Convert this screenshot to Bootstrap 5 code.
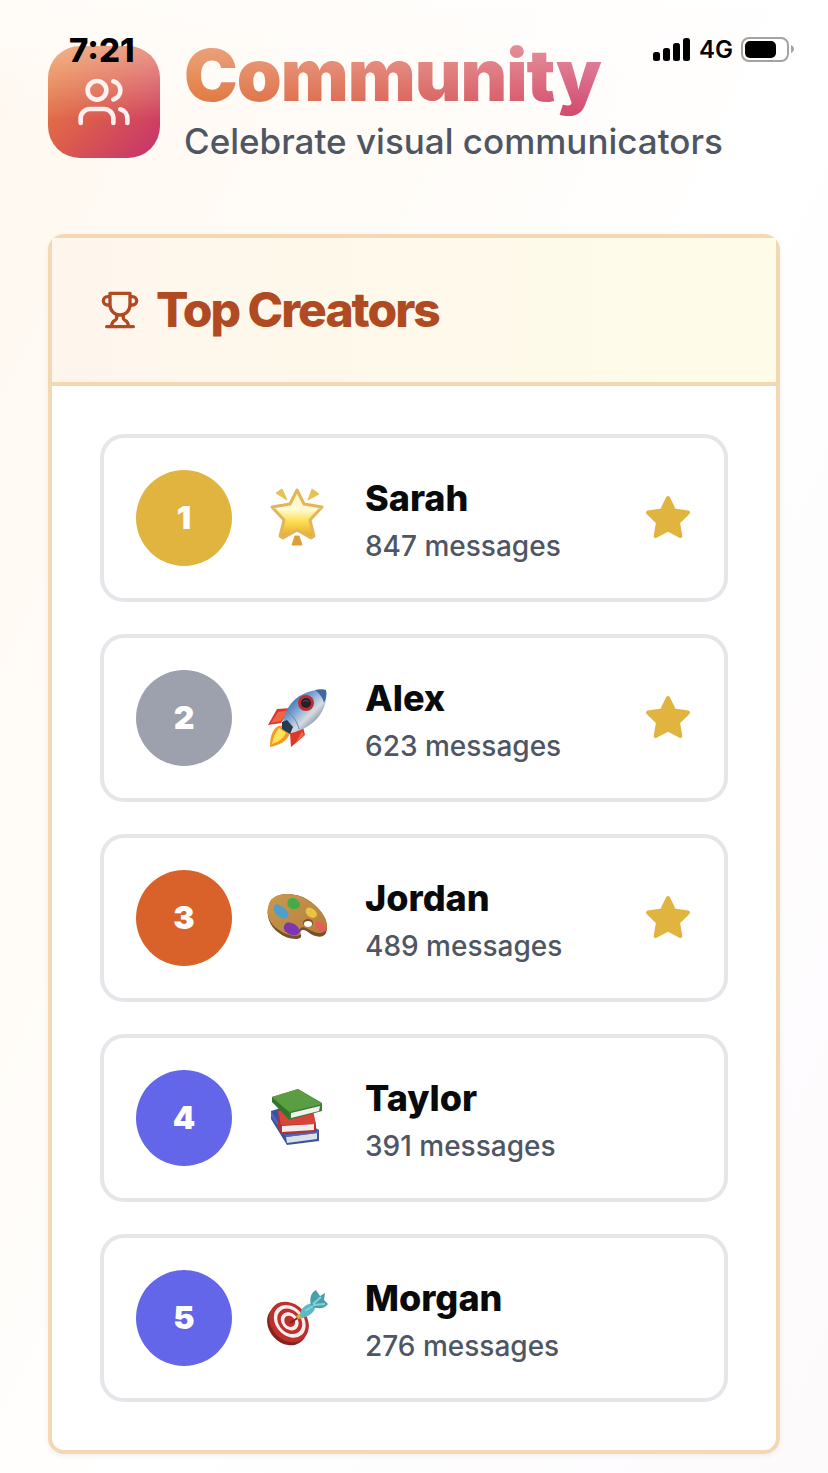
<!DOCTYPE html>
<html lang="en">
<head>
<meta charset="utf-8">
<meta name="viewport" content="width=device-width, initial-scale=1">
<title>Community</title>
<link href="https://cdn.jsdelivr.net/npm/bootstrap@5.3.0/dist/css/bootstrap.min.css" rel="stylesheet">
<style>
  body {
    font-family: Inter, "Liberation Sans", sans-serif;
    color: #090a0b;
    background: linear-gradient(115deg, #fff8f0 0%, #fffbf6 25%, #ffffff 55%, #fdfafc 100%);
    min-height: 100vh;
  }
  .page { padding: 46px 48px 19px; }
  .status-bar { z-index: 3; padding: 34px 34px 0 69px; color: #000; }
  .clock { font-size: 33px; line-height: 32px; font-weight: 800; }
  .network { font-size: 24px; line-height: 32px; font-weight: 600; }
  .top-fade {
    z-index: 2; height: 120px; pointer-events: none;
    background: linear-gradient(rgba(255,255,255,.55), rgba(255,255,255,.3) 50%, rgba(255,255,255,0));
  }
  .page-header { gap: 24px; margin-bottom: 76px; }
  .logo-tile {
    width: 112px; height: 112px; border-radius: 32px;
    background: linear-gradient(135deg, #ea8a40 0%, #dc5d4c 50%, #c5306f 100%);
  }
  .page-title {
    font-size: 72px; line-height: 72px; font-weight: 900; letter-spacing: -1px;
    padding-bottom: 8px; margin: -7px 0 -8px;
    background: linear-gradient(100deg, #e0702c 0%, #d5525a 55%, #cf3f74 85%);
    -webkit-background-clip: text; background-clip: text; color: transparent;
  }
  .subtitle { font-size: 35px; line-height: 47px; padding-top: 7px; font-weight: 500; color: #4f5663; }
  .page-header { height: 112px; }
  .creators { border: 4px solid #f4d8b4; border-radius: 16px; background: #fff; box-shadow: 0 2px 6px rgba(0,0,0,.06); }
  .creators-head {
    gap: 16px; padding: 48px; color: #b04a22;
    border-bottom: 4px solid #f4d8b4;
    background: linear-gradient(90deg, #fef6ed, #fefce8);
  }
  .creators-title { font-size: 48px; line-height: 48px; font-weight: 800; letter-spacing: -2px; }
  .creators-list { padding: 48px; gap: 32px; }
  .creator { border: 4px solid #e4e6e9; border-radius: 24px; padding: 32px; gap: 32px; }
  .rank { width: 96px; height: 96px; font-size: 32px; font-weight: 900; color: #fff; background: #6466e9; }
  .rank-gold { background: #e0b43e; }
  .rank-silver { background: #9da1ae; }
  .rank-bronze { background: #d8622a; }
  .creator-name { font-size: 36px; line-height: 56px; font-weight: 800; }
  .creator-count { font-size: 28px; line-height: 40px; font-weight: 500; color: #4f5663; }
  .star { color: #e0b43e; }
</style>
</head>
<body class="position-relative">

<div class="status-bar position-absolute top-0 start-0 end-0 d-flex justify-content-between align-items-center">
  <span class="clock">7:21</span>
  <span class="d-flex align-items-center">
    <svg class="me-2" width="38" height="24" viewBox="0 0 38 24" aria-label="Signal"><rect y="14" width="7" height="9" rx="2.5"/><rect x="10" y="10" width="7" height="13" rx="2.5"/><rect x="20" y="5" width="7" height="18" rx="2.5"/><rect x="30" y="0" width="7" height="23" rx="2.5"/></svg>
    <span class="network me-2">4G</span>
    <svg width="53" height="26" viewBox="0 0 53 26" aria-label="Battery"><rect x="1" y="1" width="46" height="23" rx="7" fill="none" stroke="#a3a3a3" stroke-width="2"/><rect x="4" y="4" width="31" height="17" rx="5"/><path d="M50 8c4 2 4 6 0 8z" fill="#a3a3a3"/></svg>
  </span>
</div>
<div class="top-fade position-absolute top-0 start-0 end-0"></div>

<div class="page">
  <header class="page-header d-flex">
    <div class="logo-tile flex-shrink-0 d-flex align-items-center justify-content-center">
      <svg width="56" height="56" viewBox="0 0 24 24" fill="none" stroke="#fdeff0" stroke-width="2" stroke-linecap="round" stroke-linejoin="round" aria-hidden="true"><path d="M16 21v-2a4 4 0 0 0-4-4H6a4 4 0 0 0-4 4v2"/><circle cx="9" cy="7" r="4"/><path d="M22 21v-2a4 4 0 0 0-3-3.870"/><path d="M16 3.130a4 4 0 0 1 0 7.750"/></svg>
    </div>
    <div>
      <h1 class="page-title">Community</h1>
      <p class="subtitle mb-0">Celebrate visual communicators</p>
    </div>
  </header>

  <section class="creators" aria-labelledby="creators-title">
    <div class="creators-head d-flex align-items-center">
      <svg width="40" height="40" viewBox="0 0 24 24" fill="none" stroke="currentColor" stroke-width="2" stroke-linecap="round" stroke-linejoin="round" aria-hidden="true"><path d="M6 9H4.500a2.500 2.500 0 0 1 0-5H6M18 9h1.500a2.500 2.500 0 0 0 0-5H18M4 22h16M10 14.660V17c0 .55-.47.98-.97 1.210C7.850 18.750 7 20.240 7 22M14 14.660V17c0 .55.47.98.97 1.210C16.150 18.750 17 20.240 17 22M18 2H6v7a6 6 0 0 0 12 0V2Z"/></svg>
      <h2 class="creators-title mb-0" id="creators-title">Top Creators</h2>
    </div>

    <ol class="creators-list list-unstyled d-flex flex-column mb-0">
      <li class="creator d-flex align-items-center">
        <span class="rank rank-gold rounded-circle flex-shrink-0 d-flex align-items-center justify-content-center">1</span>
        <svg class="flex-shrink-0" width="69" height="66" viewBox="0 0 69 66" role="img" aria-label="Glowing star">
          <defs><linearGradient id="glow" x1="0" y1="0" x2="0" y2="1"><stop offset="0" stop-color="#fff0b8"/><stop offset=".4" stop-color="#fffbd6"/><stop offset=".65" stop-color="#fddf52"/><stop offset="1" stop-color="#e2a32d"/></linearGradient></defs>
          <path d="M12 8l6-4 5 11zM48 4l7 5-11 6z" fill="#e6c254" stroke="#e6c254" stroke-linejoin="round"/>
          <path d="M31 51h4l3 9H28z" fill="#dd9f3a" stroke="#dd9f3a" stroke-linejoin="round"/>
          <path d="M33 5l7 14 18 3-12 13 4 16-3 2-14-8-14 8-3-2 4-16L8 22l18-3z" fill="url(#glow)" stroke="#e2b55a" stroke-width="3" stroke-linejoin="round"/>
        </svg>
        <div class="flex-grow-1">
          <div class="creator-name">Sarah</div>
          <div class="creator-count">847 messages</div>
        </div>
        <svg class="star flex-shrink-0" width="48" height="48" viewBox="0 0 24 24" fill="currentColor" stroke="currentColor" stroke-width="2" stroke-linejoin="round" aria-hidden="true"><path d="M12 2l3.090 6.260L22 9.270l-5 4.870 1.180 6.880L12 17.770l-6.180 3.250L7 14.140 2 9.270l6.910-1.010z"/></svg>
      </li>

      <li class="creator d-flex align-items-center">
        <span class="rank rank-silver rounded-circle flex-shrink-0 d-flex align-items-center justify-content-center">2</span>
        <svg class="flex-shrink-0" width="69" height="66" viewBox="0 0 69 66" role="img" aria-label="Rocket">
          <defs><linearGradient id="hull" x1="0" y1="0" x2="1" y2="1"><stop offset=".15" stop-color="#315f9f"/><stop offset=".4" stop-color="#7fa6d6"/><stop offset=".6" stop-color="#d8dce0"/><stop offset=".85" stop-color="#58708d"/></linearGradient></defs>
          <path d="M27 23L13 24 4 40l13-2zM39 42l2 8-14 12-1-14z" fill="#d9382a"/><path d="M26 25l-12 2-7 11 10-2zM38 46l-7 13 9-9z" fill="#ee6545"/>
          <path d="M14 41c-6 4-8 11-8 21 9-2 17-5 20-14l-5-8z" fill="#f39a25"/><path d="M15 43c-4 5-6 10-7 16 6-2 11-5 14-11z" fill="#ffe259"/>
          <path d="M19 38C22 15 42 3 62 5c3 20-12 38-35 43z" fill="url(#hull)"/>
          <path d="M51 5c4-1 8-1 11 0 1 5 0 9-2 13-1-5-4-9-9-13z" fill="#4169a1"/>
          <path d="M24 27c5 4 9 9 11 17" fill="none" stroke="#6989ae"/>
          <path d="M18 37l5-2 6 7-3 7-8-5z" fill="#263b50"/>
          <circle cx="42" cy="18" r="8" fill="#b92f2e"/><circle cx="42" cy="18" r="5" fill="#251e2d"/><path d="M39 17a4 4 0 0 1 6 0" fill="none" stroke="#575063"/>
        </svg>
        <div class="flex-grow-1">
          <div class="creator-name">Alex</div>
          <div class="creator-count">623 messages</div>
        </div>
        <svg class="star flex-shrink-0" width="48" height="48" viewBox="0 0 24 24" fill="currentColor" stroke="currentColor" stroke-width="2" stroke-linejoin="round" aria-hidden="true"><path d="M12 2l3.090 6.260L22 9.270l-5 4.870 1.180 6.880L12 17.770l-6.180 3.250L7 14.140 2 9.270l6.910-1.010z"/></svg>
      </li>

      <li class="creator d-flex align-items-center">
        <span class="rank rank-bronze rounded-circle flex-shrink-0 d-flex align-items-center justify-content-center">3</span>
        <svg class="flex-shrink-0" width="69" height="66" viewBox="0 0 69 66" role="img" aria-label="Palette">
          <defs><linearGradient id="wood" x1="0" y1="0" x2="1" y2="1"><stop stop-color="#c99a50"/><stop offset="1" stop-color="#b47c39"/></linearGradient></defs>
          <path d="M5 20c3-13 25-14 39-5 14 9 22 23 18 33-3 6-12 4-18-1-6-4-9-1-7 3 2 6-14 5-22-2C6 42 1 30 5 20z" fill="#77502a"/>
          <path d="M5 19c3-12 25-13 39-4 14 9 22 22 18 30-3 5-12 3-18-1-6-4-10-1-8 4 1 5-13 3-21-3C6 40 1 29 5 19z" fill="url(#wood)"/>
          <path d="M11 20c4-2 9 3 13 7 2 4-2 8-6 6-7-2-10-9-7-13z" fill="#4c9fd0"/><path d="M24 16c2-6 11-2 12 3 0 5-7 7-11 3-2-1-2-4-1-6z" fill="#42ad48"/>
          <path d="M43 23c4-2 10 3 10 7-2 5-9 3-11-2-1-2 0-4 1-5z" fill="#e9c43e"/><path d="M52 37c5-1 9 4 10 8-3 3-9 0-10-3z" fill="#e95b56"/>
          <path d="M21 39c5-4 13 1 15 7-1 6-10 5-14 1-2-1-3-5-1-8z" fill="#7e36b0"/><ellipse cx="44" cy="38" rx="5" ry="4" fill="#77502a"/><ellipse cx="44" cy="39" rx="4" ry="3" fill="#fff"/>
        </svg>
        <div class="flex-grow-1">
          <div class="creator-name">Jordan</div>
          <div class="creator-count">489 messages</div>
        </div>
        <svg class="star flex-shrink-0" width="48" height="48" viewBox="0 0 24 24" fill="currentColor" stroke="currentColor" stroke-width="2" stroke-linejoin="round" aria-hidden="true"><path d="M12 2l3.090 6.260L22 9.270l-5 4.870 1.180 6.880L12 17.770l-6.180 3.250L7 14.140 2 9.270l6.910-1.010z"/></svg>
      </li>

      <li class="creator d-flex align-items-center">
        <span class="rank rounded-circle flex-shrink-0 d-flex align-items-center justify-content-center">4</span>
        <svg class="flex-shrink-0" width="69" height="66" viewBox="0 0 69 66" role="img" aria-label="Books">
          <path d="M7 26l10-3 38 22v11l-32 4L7 34z" fill="#3d519e"/><path d="M22 52l31-4v6l-30 4z" fill="#dce0e7"/><path d="M7 26l15 24 32-4v2l-32 4L7 31z" fill="#5068bd"/>
          <path d="M15 22l31-4 6 22v7l-35 2-3-8z" fill="#b92f2b"/><path d="M18 41l32-2v6l-32 2z" fill="#eee"/><path d="M14 26l3 14 35-1-3-14z" fill="#d9443a"/>
          <path d="M8 12l26-8 24 14v8l-33 9L8 16z" fill="#3b7e31"/><path d="M27 28l29-7-1 5-28 7z" fill="#f2f3f0"/><path d="M8 12l26-8 24 15-33 8z" fill="#5b9d42"/><path d="M8 13l17 14v7L8 17z" fill="#33742c"/>
        </svg>
        <div class="flex-grow-1">
          <div class="creator-name">Taylor</div>
          <div class="creator-count">391 messages</div>
        </div>
      </li>

      <li class="creator d-flex align-items-center">
        <span class="rank rounded-circle flex-shrink-0 d-flex align-items-center justify-content-center">5</span>
        <svg class="flex-shrink-0" width="69" height="66" viewBox="0 0 69 66" role="img" aria-label="Dart on target">
          <ellipse cx="23" cy="40" rx="18" ry="22" fill="#85221f" transform="rotate(-42 23 40)"/>
          <g transform="rotate(-42 25 37)"><ellipse cx="25" cy="37" rx="18" ry="22" fill="#bd302d"/><ellipse cx="26" cy="37" rx="14" ry="18" fill="#f7eeee"/><ellipse cx="26" cy="37" rx="11" ry="14" fill="#bd302d"/><ellipse cx="26" cy="37" rx="8" ry="10" fill="#f7eeee"/><ellipse cx="26" cy="37" rx="5" ry="6" fill="#bd302d"/></g>
          <path d="M26 38l12-8" stroke="#85221f" stroke-width="2"/><path d="M32 31l5-3 3 5-6 1z" fill="#dfac3b"/>
          <path d="M36 31c0-8 7-13 14-13 4 5-2 13-12 15z" fill="#5fb9c4"/><path d="M47 20c-2-8 1-13 5-15l4 6 5-3-1 7 4 4c-4 5-9 5-15 3z" fill="#489fab"/><path d="M49 19l8-7M49 20l12-1M41 26l8-5" stroke="#86d1d7" stroke-width="2"/>
        </svg>
        <div class="flex-grow-1">
          <div class="creator-name">Morgan</div>
          <div class="creator-count">276 messages</div>
        </div>
      </li>
    </ol>
  </section>
</div>
<script src="https://cdn.jsdelivr.net/npm/bootstrap@5.3.0/dist/js/bootstrap.bundle.min.js"></script>
</body>
</html>
